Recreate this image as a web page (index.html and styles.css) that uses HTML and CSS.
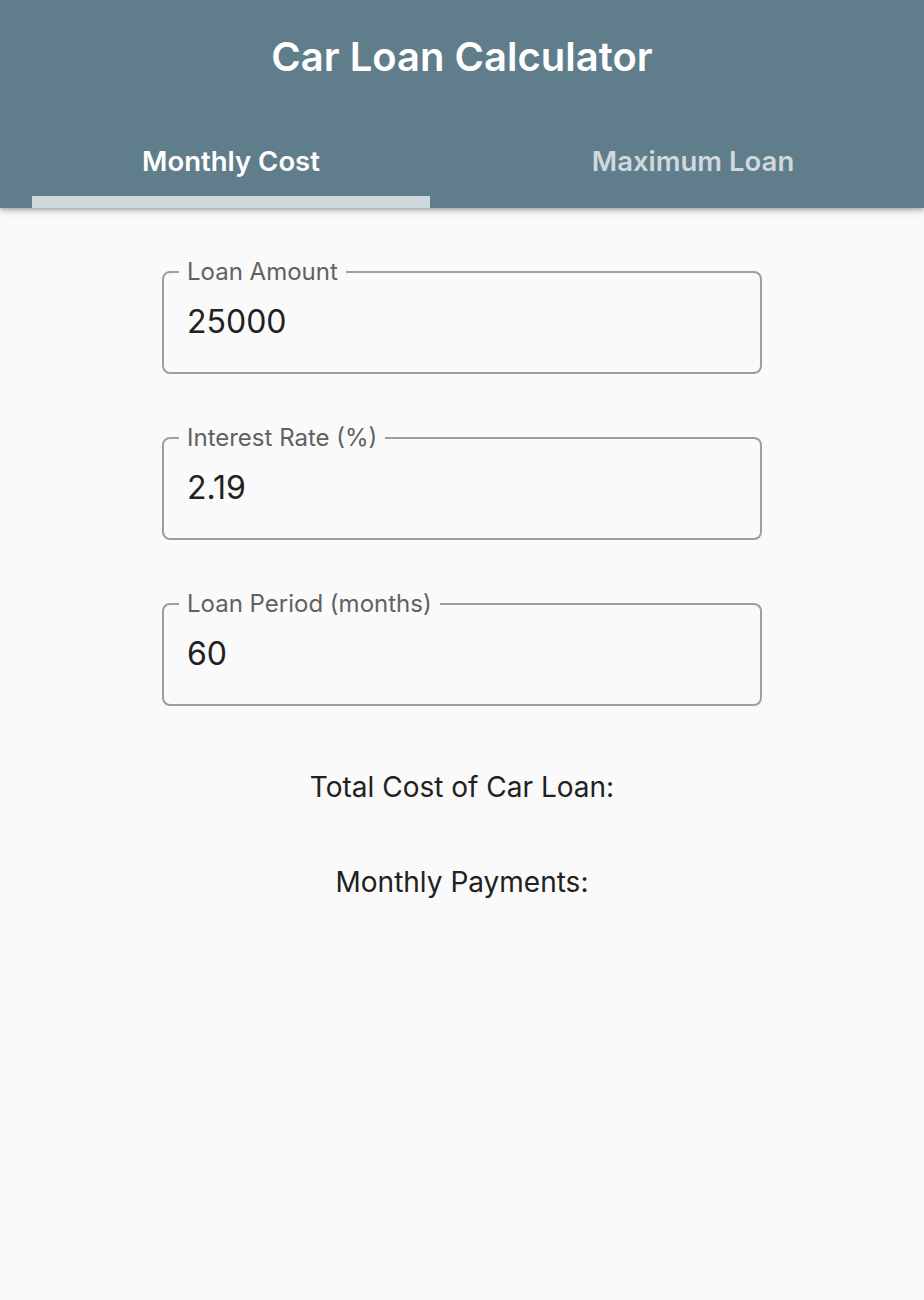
FILE: index.html
```html
<!DOCTYPE html>
<html lang="en">
<head>
<meta charset="utf-8">
<title>Car Loan Calculator</title>
<link rel="stylesheet" href="styles.css">
</head>
<body>
<header class="app-bar">
  <h1 class="app-title">Car Loan Calculator</h1>
  <nav class="tabs">
    <div class="tab tab-active"><span class="tab-label">Monthly Cost</span><span class="tab-indicator"></span></div>
    <div class="tab"><span class="tab-label">Maximum Loan</span><span class="tab-indicator"></span></div>
  </nav>
</header>
<main class="content">
  <fieldset class="field">
    <legend class="field-label">Loan Amount</legend>
    <input class="field-input" type="text" value="25000">
  </fieldset>
  <fieldset class="field">
    <legend class="field-label">Interest Rate (%)</legend>
    <input class="field-input" type="text" value="2.19">
  </fieldset>
  <fieldset class="field">
    <legend class="field-label">Loan Period (months)</legend>
    <input class="field-input" type="text" value="60">
  </fieldset>
  <p class="result">Total Cost of Car Loan:</p>
  <p class="result">Monthly Payments:</p>
</main>
</body>
</html>
```
FILE: styles.css
```css
* { box-sizing: border-box; }
html, body {
  margin: 0;
  padding: 0;
  background: #fafafa;
  font-family: Inter, "Noto Sans", sans-serif;
}
body { min-height: 1300px; }

.app-bar {
  background: #607d8b;
  height: 208px;
  display: flex;
  flex-direction: column;
  box-shadow: 0 2px 4px rgba(0,0,0,0.25), 0 4px 8px rgba(0,0,0,0.1);
  position: relative;
}
.app-title {
  margin: 0;
  height: 112px;
  display: flex;
  align-items: center;
  justify-content: center;
  color: #fff;
  font-size: 40px;
  font-weight: 600;
}
.tabs {
  display: flex;
  height: 96px;
}
.tab {
  flex: 1;
  display: flex;
  flex-direction: column;
  align-items: center;
  padding: 0 32px;
}
.tab-label {
  flex: 1;
  display: flex;
  align-items: center;
  padding-top: 14px;
  color: #cfd8dc;
  font-size: 27.5px;
  font-weight: 600;
}
.tab-active .tab-label { color: #fff; }
.tab-indicator {
  align-self: stretch;
  height: 12px;
  background: transparent;
}
.tab-active .tab-indicator { background: #cfd8dc; }

.content {
  display: flex;
  flex-direction: column;
  align-items: center;
  padding-top: 52px;
}
.field {
  width: 600px;
  margin: 0 0 52px;
  padding: 0 15px 31px;
  border: 2px solid #9e9e9e;
  border-radius: 8px;
  min-width: 0;
}
.field-label {
  padding: 0 8px;
  font-size: 24px;
  line-height: 24px;
  color: #616161;
}
.field-input {
  display: block;
  width: 100%;
  margin-top: 17px;
  height: 40px;
  padding: 0 8px;
  border: none;
  outline: none;
  background: transparent;
  font-family: Inter, "Noto Sans", sans-serif;
  font-size: 32px;
  color: #212121;
}
.result {
  margin: 9px 0 46px;
  font-size: 28px;
  line-height: 40px;
  color: #212121;
}
```
